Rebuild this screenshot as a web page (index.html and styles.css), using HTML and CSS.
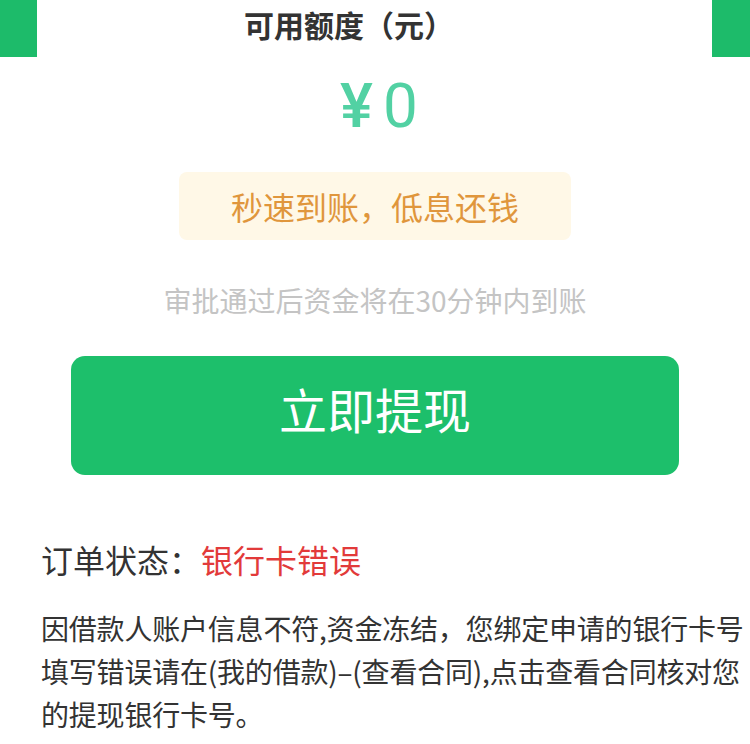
FILE: index.html
```html
<!DOCTYPE html>
<html lang="zh-CN">
<head>
<meta charset="utf-8">
<title>提现</title>
<link rel="stylesheet" href="styles.css">
</head>
<body>
<div class="page">
  <div class="top">
    <div class="bar bar-left"></div>
    <div class="title">可用额度（元）</div>
    <div class="bar bar-right"></div>
  </div>
  <div class="amount"><span class="yen">¥</span><span class="num">0</span></div>
  <div class="promo">秒速到账，低息还钱</div>
  <div class="note">审批通过后资金将在30分钟内到账</div>
  <div class="btn-wrap"><div class="btn">立即提现</div></div>
  <div class="status">订单状态：<span class="err">银行卡错误</span></div>
  <p class="desc">因借款人账户信息不符,资金冻结，您绑定申请的银行卡号填写错误请在(我的借款)–(查看合同),点击查看合同核对您的提现银行卡号。</p>
</div>
</body>
</html>
```
FILE: styles.css
```css
html, body {
  margin: 0;
  padding: 0;
  background: #ffffff;
}
body {
  font-family: "Noto Sans CJK SC", "Noto Sans", sans-serif;
  color: #333333;
}
.page {
  width: 750px;
  height: 744px;
  overflow: hidden;
}
.top {
  display: flex;
  height: 57px;
}
.bar {
  background: #1dbb6a;
  height: 57px;
}
.bar-left { width: 37px; }
.bar-right { width: 38px; }
.title {
  flex: 1;
  padding-left: 207px;
  font-size: 30px;
  font-weight: bold;
  line-height: 48px;
  color: #333333;
}
.amount {
  margin-top: 11px;
  text-align: center;
  color: #52d1a3;
  font-family: Roboto, "Noto Sans", sans-serif;
  font-weight: 500;
  font-size: 62px;
  line-height: 76px;
  padding-left: 8px;
}
.yen { margin-right: 10px; }
.num { font-weight: 400; }
.promo {
  width: 392px;
  height: 68px;
  margin: 28px auto 0;
  background: #fff8e7;
  border-radius: 8px;
  color: #e0963c;
  font-size: 32px;
  line-height: 68px;
  text-align: center;
}
.note {
  margin-top: 42px;
  text-align: center;
  color: #c4c4c4;
  font-size: 28px;
  line-height: 36px;
}
.btn-wrap {
  padding: 0 71px;
  margin-top: 38px;
}
.btn {
  height: 119px;
  background: #1dbf6b;
  border-radius: 14px;
  color: #ffffff;
  font-size: 48px;
  line-height: 105px;
  text-align: center;
}
.status {
  margin-top: 64px;
  padding-left: 41px;
  font-size: 32px;
  line-height: 40px;
  color: #333333;
}
.err { color: #e23a3a; }
.desc {
  margin: 28px 0 0;
  padding-left: 41px;
  width: 709px;
  font-size: 28px;
  letter-spacing: -0.2px;
  line-height: 43px;
  color: #333333;
}
```
